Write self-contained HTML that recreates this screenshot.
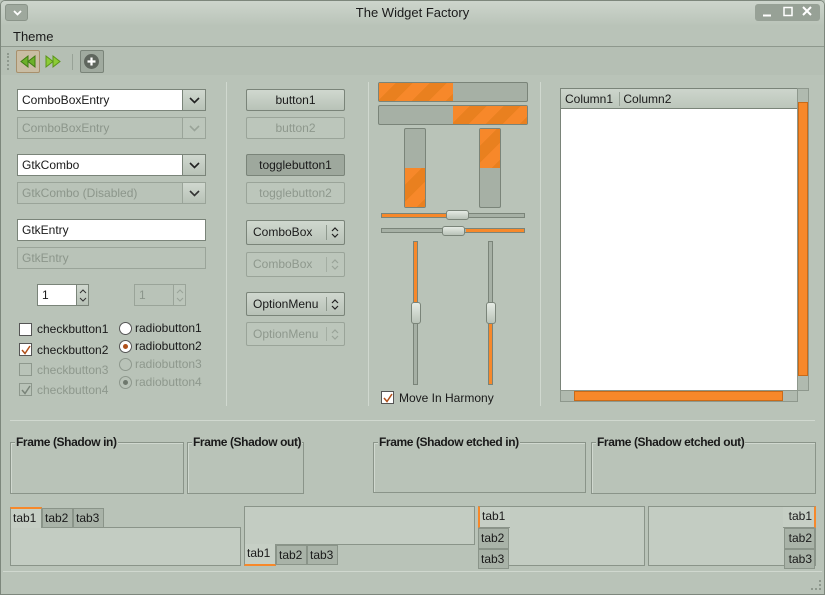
<!DOCTYPE html>
<html><head><meta charset="utf-8"><style>
*{box-sizing:border-box;margin:0;padding:0}
body{width:825px;height:595px;background:#b9c3b8;font-family:"Liberation Sans","DejaVu Sans",sans-serif;font-size:12px;color:#1a1a1a;position:relative;overflow:hidden}
.a{position:absolute}
#win{left:0;top:0;width:825px;height:595px;border:1px solid #7d877c;border-radius:5px 5px 0 0}
.tb{left:1px;top:1px;width:823px;height:24px;background:linear-gradient(#cdd5cc,#bac4b9);border-radius:4px 4px 0 0}
.entry{background:#fff;border:1px solid #7a8479;height:22px;padding:3px 4px;font-size:12px}
.dis{background:#b9c3b8;color:#8c968b;border-color:#9aa499}
.btn{border:1px solid #7a8479;border-radius:2px;background:linear-gradient(#d0d8cf,#b8c2b7);text-align:center;font-size:12px;line-height:20px}
.btn.d{color:#8e988d;border-color:#9aa499;background:#bcc6bb}
.dd{border:1px solid #7a8479;background:linear-gradient(#d0d8cf,#b8c2b7)}
.dd svg{position:absolute;left:6px;top:7px}
.chk{width:13px;height:13px;border:1px solid #555;background:#fff}
.rad{width:13px;height:13px;border:1px solid #555;background:#fff;border-radius:50%}
.lbl{font-size:12px;white-space:nowrap}
.g{color:#8e988d}
.vs{width:1px;background:#97a196;border-right:1px solid #d0d8cf}
.or{background:repeating-linear-gradient(135deg,#f7882a 0 12px,#e9801f 12px 24px)}
.trough{background:#a6b0a5;border:1px solid #7a8479}
.frame{border:1px solid #8a9489;box-shadow:inset 1px 1px 0 #d0d8cf}
.fl{font-size:12px;font-weight:bold;background:#b9c3b8;padding:0 1px;top:-8px;left:4px;position:absolute;line-height:14px;white-space:nowrap;letter-spacing:-0.4px}
.tab{border:1px solid #8a9489;background:#a9b3a8;font-size:12px;line-height:18px;padding:0 2px}
.tab.on{background:#c6cfc5}
.page{border:1px solid #8a9489;background:#c3ccc2}
.thumb{background:linear-gradient(#e5ebe4,#b9c3b8);border:1px solid #7a8479;border-radius:3px}
</style></head><body>
<div class="a" id="win"></div>
<div class="a tb"></div>
<div class="a" style="left:5px;top:4px;width:23px;height:17px;background:#9ea89d;border:1px solid #8a9489;border-radius:3px"><svg class="a" style="left:7px;top:5px" width="9" height="6"><path d="M1 1 L4.5 4.5 L8 1" fill="none" stroke="#fff" stroke-width="1.8"/></svg></div>
<div class="a" style="left:0;width:825px;top:5px;text-align:center;font-size:13px">The Widget Factory</div>
<div class="a" style="left:755px;top:4px;width:65px;height:17px;background:#97a196;border-radius:3px"></div>
<svg class="a" style="left:755px;top:4px" width="65" height="17"><path d="M8 11.5 H16" stroke="#fff" stroke-width="2"/><rect x="29" y="3.5" width="8" height="8" fill="none" stroke="#fff" stroke-width="1.5"/><path d="M48 3 L56 11 M56 3 L48 11" stroke="#fff" stroke-width="2"/></svg>
<div class="a" style="left:13px;top:29px;font-size:13px">Theme</div>
<div class="a" style="left:1px;top:46px;width:823px;height:1px;background:#8e988d"></div>
<div class="a" style="left:1px;top:47px;width:823px;height:28px;background:#b5bfb4"></div>
<div class="a" style="left:7px;top:53px;width:2px;height:17px;border-left:2px dotted #8e988d"></div>
<div class="a" style="left:16px;top:50px;width:24px;height:23px;background:#c9bda4;border:1px solid #a8906c;border-radius:2px"></div>
<svg class="a" style="left:19px;top:53px" width="18" height="17"><path d="M9 3 L2 8.5 L9 14Z M16 3 L9 8.5 L16 14Z" fill="#6cb12a" stroke="#3f7a14"/></svg>
<svg class="a" style="left:44px;top:53px" width="18" height="17"><path d="M2 3 L9 8.5 L2 14Z M9 3 L16 8.5 L9 14Z" fill="#8ccc36" stroke="#5b951a"/></svg>
<div class="a" style="left:72px;top:54px;width:1px;height:16px;background:#98a297"></div>
<div class="a" style="left:80px;top:50px;width:24px;height:23px;background:#a0aa9f;border:1px solid #7a8479;border-radius:2px"></div>
<div class="a" style="left:84px;top:54px;width:15px;height:15px;border-radius:50%;background:#5f665e"></div>
<svg class="a" style="left:84px;top:54px" width="15" height="15"><path d="M7.5 3.5 V11.5 M3.5 7.5 H11.5" stroke="#fff" stroke-width="2.2"/></svg>

<!-- left column -->
<div class="a entry" style="left:17px;top:89px;width:166px">ComboBoxEntry</div>
<div class="a dd" style="left:182px;top:89px;width:24px;height:22px"><svg width="11" height="7"><path d="M1 1 L5.5 5.5 L10 1" fill="none" stroke="#222" stroke-width="1.6"/></svg></div>
<div class="a entry dis" style="left:17px;top:117px;width:166px">ComboBoxEntry</div>
<div class="a dd" style="left:182px;top:117px;width:24px;height:22px;border-color:#9aa499;background:#bcc6bb"><svg width="11" height="7"><path d="M1 1 L5.5 5.5 L10 1" fill="none" stroke="#99a398" stroke-width="1.6"/></svg></div>
<div class="a entry" style="left:17px;top:154px;width:166px">GtkCombo</div>
<div class="a dd" style="left:182px;top:154px;width:24px;height:22px"><svg width="11" height="7"><path d="M1 1 L5.5 5.5 L10 1" fill="none" stroke="#222" stroke-width="1.6"/></svg></div>
<div class="a entry dis" style="left:17px;top:182px;width:166px">GtkCombo (Disabled)</div>
<div class="a dd" style="left:182px;top:182px;width:24px;height:22px;border-color:#9aa499"><svg width="11" height="7"><path d="M1 1 L5.5 5.5 L10 1" fill="none" stroke="#333" stroke-width="1.6"/></svg></div>
<div class="a entry" style="left:17px;top:219px;width:189px">GtkEntry</div>
<div class="a entry dis" style="left:17px;top:247px;width:189px">GtkEntry</div>
<div class="a entry" style="left:37px;top:284px;width:40px">1</div>
<div class="a dd" style="left:76px;top:284px;width:13px;height:22px"><svg class="a" style="left:2px;top:2px" width="8" height="17"><path d="M1 6 L4 3 L7 6 M1 11 L4 14 L7 11" fill="none" stroke="#333" stroke-width="1"/></svg></div>
<div class="a entry dis" style="left:134px;top:284px;width:40px">1</div>
<div class="a dd" style="left:173px;top:284px;width:13px;height:22px;border-color:#9aa499;background:#bcc6bb"><svg class="a" style="left:2px;top:2px" width="8" height="17"><path d="M1 6 L4 3 L7 6 M1 11 L4 14 L7 11" fill="none" stroke="#99a398" stroke-width="1"/></svg></div>

<div class="a chk" style="left:19px;top:323px"></div><div class="a lbl" style="left:37px;top:322px">checkbutton1</div>
<div class="a chk" style="left:19px;top:343px"><svg class="a" style="left:1px;top:1px" width="10" height="10"><path d="M1 5 L4 8.5 L9 1" fill="none" stroke="#b0501a" stroke-width="1.5"/></svg></div><div class="a lbl" style="left:37px;top:343px">checkbutton2</div>
<div class="a chk" style="left:19px;top:363px;background:#b9c3b8;border-color:#8e988d"></div><div class="a lbl g" style="left:37px;top:363px">checkbutton3</div>
<div class="a chk" style="left:19px;top:383px;background:#b9c3b8;border-color:#8e988d"><svg class="a" style="left:1px;top:1px" width="10" height="10"><path d="M1 5 L4 8.5 L9 1" fill="none" stroke="#7a8479" stroke-width="1.5"/></svg></div><div class="a lbl g" style="left:37px;top:383px">checkbutton4</div>
<div class="a rad" style="left:119px;top:322px"></div><div class="a lbl" style="left:135px;top:321px">radiobutton1</div>
<div class="a rad" style="left:119px;top:340px"><div class="a" style="left:3px;top:3px;width:5px;height:5px;border-radius:50%;background:#b0501a"></div></div><div class="a lbl" style="left:135px;top:339px">radiobutton2</div>
<div class="a rad" style="left:119px;top:358px;background:#b9c3b8;border-color:#8e988d"></div><div class="a lbl g" style="left:135px;top:357px">radiobutton3</div>
<div class="a rad" style="left:119px;top:376px;background:#b9c3b8;border-color:#8e988d"><div class="a" style="left:3px;top:3px;width:5px;height:5px;border-radius:50%;background:#6e786d"></div></div><div class="a lbl g" style="left:135px;top:375px">radiobutton4</div>

<div class="a vs" style="left:226px;top:82px;height:324px"></div>
<div class="a vs" style="left:368px;top:82px;height:324px"></div>
<div class="a vs" style="left:540px;top:82px;height:324px"></div>

<!-- buttons -->
<div class="a btn" style="left:246px;top:89px;width:99px;height:22px">button1</div>
<div class="a btn d" style="left:246px;top:117px;width:99px;height:22px">button2</div>
<div class="a btn" style="left:246px;top:154px;width:99px;height:22px;background:#9ea89d">togglebutton1</div>
<div class="a btn d" style="left:246px;top:182px;width:99px;height:22px">togglebutton2</div>
<div class="a btn" style="left:246px;top:220px;width:99px;height:25px;text-align:left;padding-left:6px;line-height:23px">ComboBox<span class="a" style="left:79px;top:4px;width:1px;height:15px;background:#8e988d"></span><svg class="a" style="left:84px;top:5px" width="8" height="13"><path d="M1 5 L4 2 L7 5 M1 8 L4 11 L7 8" fill="none" stroke="#222" stroke-width="1.2"/></svg></div>
<div class="a btn d" style="left:246px;top:252px;width:99px;height:25px;text-align:left;padding-left:6px;line-height:23px">ComboBox<span class="a" style="left:79px;top:4px;width:1px;height:15px;background:#a4aea3"></span><svg class="a" style="left:84px;top:5px" width="8" height="13"><path d="M1 5 L4 2 L7 5 M1 8 L4 11 L7 8" fill="none" stroke="#99a398" stroke-width="1.2"/></svg></div>
<div class="a btn" style="left:246px;top:292px;width:99px;height:24px;text-align:left;padding-left:6px;line-height:22px">OptionMenu<span class="a" style="left:79px;top:4px;width:1px;height:14px;background:#8e988d"></span><svg class="a" style="left:84px;top:5px" width="8" height="13"><path d="M1 5 L4 2 L7 5 M1 8 L4 11 L7 8" fill="none" stroke="#222" stroke-width="1.2"/></svg></div>
<div class="a btn d" style="left:246px;top:322px;width:99px;height:24px;text-align:left;padding-left:6px;line-height:22px">OptionMenu<span class="a" style="left:79px;top:4px;width:1px;height:14px;background:#a4aea3"></span><svg class="a" style="left:84px;top:5px" width="8" height="13"><path d="M1 5 L4 2 L7 5 M1 8 L4 11 L7 8" fill="none" stroke="#99a398" stroke-width="1.2"/></svg></div>

<!-- progress -->
<div class="a trough" style="left:378px;top:82px;width:150px;height:20px;border-radius:2px"><div class="a or" style="left:0;top:0;width:74px;height:18px"></div></div>
<div class="a trough" style="left:378px;top:105px;width:150px;height:20px;border-radius:2px"><div class="a or" style="left:74px;top:0;width:74px;height:18px"></div></div>
<div class="a trough" style="left:404px;top:128px;width:22px;height:80px;border-radius:2px"><div class="a or" style="left:0;top:39px;width:20px;height:39px"></div></div>
<div class="a trough" style="left:479px;top:128px;width:22px;height:80px;border-radius:2px"><div class="a or" style="left:0;top:0;width:20px;height:39px"></div></div>
<div class="a trough" style="left:381px;top:213px;width:144px;height:5px"><div class="a" style="left:0;top:0;width:66px;height:3px;background:#f7882a"></div></div>
<div class="a thumb" style="left:446px;top:210px;width:23px;height:10px"></div>
<div class="a trough" style="left:381px;top:228px;width:144px;height:5px"><div class="a" style="left:84px;top:0;width:58px;height:3px;background:#f7882a"></div></div>
<div class="a thumb" style="left:442px;top:226px;width:23px;height:10px"></div>
<div class="a trough" style="left:413px;top:241px;width:5px;height:144px"><div class="a" style="left:0;top:0;width:3px;height:62px;background:#f7882a"></div></div>
<div class="a thumb" style="left:411px;top:302px;width:10px;height:22px"></div>
<div class="a trough" style="left:488px;top:241px;width:5px;height:144px"><div class="a" style="left:0;top:82px;width:3px;height:60px;background:#f7882a"></div></div>
<div class="a thumb" style="left:486px;top:302px;width:10px;height:22px"></div>
<div class="a chk" style="left:381px;top:391px"><svg class="a" style="left:1px;top:1px" width="10" height="10"><path d="M1 5 L4 8.5 L9 1" fill="none" stroke="#b0501a" stroke-width="1.5"/></svg></div>
<div class="a lbl" style="left:399px;top:391px">Move In Harmony</div>

<!-- tree -->
<div class="a" style="left:560px;top:88px;width:238px;height:303px;background:#fff;border:1px solid #7a8479"></div>
<div class="a" style="left:561px;top:89px;width:236px;height:20px;background:linear-gradient(#cdd5cc,#bcc6bb);border-bottom:1px solid #7a8479;font-size:12px;line-height:20px;padding-left:4px">Column1 <span style="border-left:1px solid #98a297;margin:0 3px"></span> Column2</div>
<div class="a" style="left:797px;top:88px;width:12px;height:303px;background:#b0baaf;border:1px solid #8e988d"></div>
<div class="a" style="left:798px;top:102px;width:10px;height:274px;background:#f7882a;border:1px solid #c96a18"></div>
<div class="a" style="left:560px;top:390px;width:238px;height:12px;background:#b0baaf;border:1px solid #8e988d"></div>
<div class="a" style="left:574px;top:391px;width:209px;height:10px;background:#f7882a;border:1px solid #c96a18"></div>

<div class="a" style="left:10px;top:420px;width:805px;height:1px;background:#97a196;border-bottom:1px solid #d0d8cf"></div>

<!-- frames -->
<div class="a frame" style="left:10px;top:442px;width:174px;height:52px"><span class="fl">Frame (Shadow in)</span></div>
<div class="a frame" style="left:187px;top:442px;width:117px;height:52px"><span class="fl">Frame (Shadow out)</span></div>
<div class="a frame" style="left:373px;top:442px;width:213px;height:51px"><span class="fl">Frame (Shadow etched in)</span></div>
<div class="a frame" style="left:591px;top:442px;width:225px;height:52px"><span class="fl">Frame (Shadow etched out)</span></div>

<!-- notebooks -->
<div class="a page" style="left:10px;top:527px;width:231px;height:39px"></div>
<div class="a tab on" style="left:10px;top:507px;width:32px;height:21px;border-top:2px solid #f7882a;border-bottom:none">tab1</div>
<div class="a tab" style="left:42px;top:508px;width:31px;height:20px">tab2</div>
<div class="a tab" style="left:73px;top:508px;width:31px;height:20px">tab3</div>

<div class="a page" style="left:244px;top:506px;width:231px;height:39px"></div>
<div class="a tab on" style="left:244px;top:544px;width:32px;height:22px;border-bottom:2px solid #f7882a;border-top:none">tab1</div>
<div class="a tab" style="left:276px;top:545px;width:31px;height:20px">tab2</div>
<div class="a tab" style="left:307px;top:545px;width:31px;height:20px">tab3</div>

<div class="a page" style="left:478px;top:506px;width:167px;height:60px"></div>
<div class="a tab on" style="left:478px;top:506px;width:32px;height:22px;border-left:2px solid #f7882a;border-right:none">tab1</div>
<div class="a tab" style="left:478px;top:528px;width:31px;height:21px">tab2</div>
<div class="a tab" style="left:478px;top:549px;width:31px;height:20px">tab3</div>

<div class="a page" style="left:648px;top:506px;width:168px;height:60px"></div>
<div class="a tab on" style="left:783px;top:506px;width:33px;height:22px;border-right:2px solid #f7882a;border-left:none;text-align:right">tab1</div>
<div class="a tab" style="left:784px;top:528px;width:31px;height:21px;text-align:right">tab2</div>
<div class="a tab" style="left:784px;top:549px;width:31px;height:20px;text-align:right">tab3</div>

<div class="a" style="left:3px;top:571px;width:819px;height:1px;background:#97a196;border-bottom:1px solid #d0d8cf"></div>
<div class="a" style="left:811px;top:580px;width:10px;height:10px;border-right:2px dotted #8e988d;border-bottom:2px dotted #8e988d"></div>
</body></html>
